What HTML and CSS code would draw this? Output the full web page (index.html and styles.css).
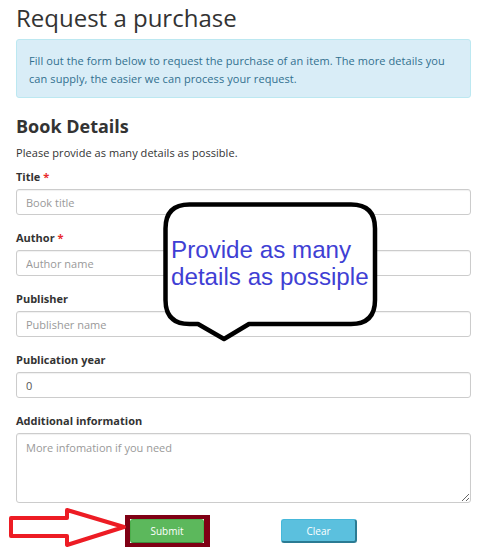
FILE: index.html
```html
<!DOCTYPE html>
<html>
<head>
<meta charset="utf-8">
<link rel="stylesheet" href="styles.css">
</head>
<body>
<div class="page">
  <h1 class="title">Request a purchase</h1>
  <div class="alert">Fill out the form below to request the purchase of an item. The more details you can supply, the easier we can process your request.</div>
  <h2 class="section">Book Details</h2>
  <p class="hint">Please provide as many details as possible.</p>
  <form class="form">
    <div class="field">
      <label class="label">Title <span class="req">*</span></label>
      <input class="input" type="text" placeholder="Book title">
    </div>
    <div class="field">
      <label class="label">Author <span class="req">*</span></label>
      <input class="input" type="text" placeholder="Author name">
    </div>
    <div class="field">
      <label class="label">Publisher</label>
      <input class="input" type="text" placeholder="Publisher name">
    </div>
    <div class="field">
      <label class="label">Publication year</label>
      <input class="input value" type="text" value="0">
    </div>
    <div class="field field-last">
      <label class="label">Additional information</label>
      <textarea class="input area" placeholder="More infomation if you need"></textarea>
    </div>
    <div class="actions">
      <span class="highlight"><button type="button" class="btn btn-success">Submit</button></span>
      <button type="button" class="btn btn-info">Clear</button>
    </div>
  </form>

  <div class="bubble">
    <svg class="bubble-shape" width="226" height="150" viewBox="0 0 226 150">
      <path d="M31.5 6.5 H193 Q217 6.5 217 30.5 V102 Q217 126 193 126 H91 L66 141 L40 126 H31.5 Q7.5 126 7.5 102 V30.5 Q7.5 6.5 31.5 6.5 Z" fill="#fff" stroke="#000" stroke-width="4.5" stroke-linejoin="round"/>
    </svg>
    <div class="bubble-text">Provide as many<br>details as possiple</div>
  </div>

  <svg class="arrow" width="140" height="56" viewBox="0 500 140 56">
    <path d="M11 518 H67 V510 L124 527 L67 545 V536 H11 Z" fill="#fff" stroke="#ed1c24" stroke-width="4" stroke-linejoin="round"/>
  </svg>
</div>
</body>
</html>
```

FILE: styles.css
```css
* { box-sizing: border-box; }
html, body {
  margin: 0;
  padding: 0;
  background: #fff;
}
body {
  font-family: "Open Sans", "DejaVu Sans", sans-serif;
  color: #333;
}
.page {
  position: relative;
  width: 493px;
  height: 557px;
  padding: 0 22px 0 16px;
  overflow: hidden;
}
.title {
  margin: 0;
  padding-top: 3px;
  font-size: 24px;
  font-weight: 400;
  line-height: 30px;
  color: #333;
  height: 39px;
}
.alert {
  background: #d9edf7;
  border: 1px solid #bce8f1;
  border-radius: 3px;
  color: #31708f;
  font-size: 11px;
  letter-spacing: 0.08px;
  line-height: 18px;
  padding: 12px 12px 11px 12px;
  height: 59px;
}
.section {
  margin: 15px 0 0 0;
  font-size: 18px;
  font-weight: 700;
  line-height: 26px;
  color: #333;
}
.hint {
  margin: 6px 0 0 0;
  font-size: 11px;
  letter-spacing: 0.05px;
  line-height: 16px;
  color: #333;
}
.form {
  margin-top: 8px;
}
.field {
  margin-bottom: 15px;
}
.field-last {
  margin-bottom: 12px;
}
.label {
  display: block;
  font-size: 11px;
  font-weight: 700;
  line-height: 16px;
  margin-bottom: 4px;
  color: #333;
}
.req { color: #e8292b; }
.input {
  display: block;
  width: 100%;
  height: 26px;
  border: 1px solid #ccc;
  border-radius: 3px;
  padding: 0 9px;
  font-family: "Open Sans", "DejaVu Sans", sans-serif;
  font-size: 11px;
  color: #555;
  background: #fff;
  box-shadow: inset 0 1px 1px rgba(0,0,0,0.06);
  outline: none;
}
.input::placeholder { color: #999; }
.area {
  height: 70px;
  padding: 6px 9px;
  resize: vertical;
}
.actions {
  display: flex;
  align-items: center;
  gap: 71px;
  padding-left: 109px;
}
.highlight {
  display: flex;
  border: 5px solid #7f0014;
  border-top-width: 4px;
  border-bottom-width: 4px;
  border-right-width: 6px;
}
.btn {
  height: 24px;
  border-radius: 3px;
  font-family: "Open Sans", "DejaVu Sans", sans-serif;
  font-size: 10px;
  color: #fff;
  padding: 0;
  cursor: pointer;
}
.btn-success {
  width: 74px;
  background: #5cb85c;
  border: 1px solid #4cae4c;
  border-bottom-color: #3d8b3d;
}
.btn-info {
  width: 76px;
  background: #5bc0de;
  border: 1px solid #46b8da;
  border-bottom: 2px solid #2b7b93;
  border-right: 2px solid #2b7b93;
}
.bubble {
  position: absolute;
  left: 158px;
  top: 198px;
  width: 226px;
  height: 150px;
}
.bubble-shape {
  position: absolute;
  left: 0;
  top: 0;
}
.bubble-text {
  position: absolute;
  left: 13px;
  top: 38px;
  font-family: "Liberation Sans", Arial, sans-serif;
  font-size: 24.2px;
  line-height: 27px;
  color: #3f3fd4;
  white-space: nowrap;
}
.arrow {
  position: absolute;
  left: 0;
  top: 500px;
}
```
